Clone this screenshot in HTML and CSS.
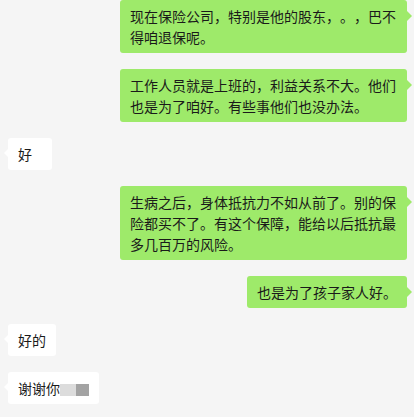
FILE: index.html
```html
<html>
<head>
  <link rel="stylesheet" href="styles.css">
</head>
<body>
  <div class="chat">
    <div class="row row-me"><div class="bubble bubble-me">现在保险公司，特别是他的股东，。，巴不得咱退保呢。</div></div>
    <div class="row row-me"><div class="bubble bubble-me">工作人员就是上班的，利益关系不大。他们也是为了咱好。有些事他们也没办法。</div></div>
    <div class="row row-other"><div class="bubble bubble-other short">好</div></div>
    <div class="row row-me"><div class="bubble bubble-me">生病之后，身体抵抗力不如从前了。别的保险都买不了。有这个保障，能给以后抵抗最多几百万的风险。</div></div>
    <div class="row row-me"><div class="bubble bubble-me">也是为了孩子家人好。</div></div>
    <div class="row row-other"><div class="bubble bubble-other">好的</div></div>
    <div class="row row-other"><div class="bubble bubble-other">谢谢你<span class="blur"><span class="blur-light"></span><span class="blur-dark"></span></span></div></div>
  </div>
</body>
</html>
```

FILE: styles.css
```css
body {
  margin: 0;
  background-color: #f5f5f5;
  font-family: "Noto Sans CJK SC", "Microsoft YaHei", sans-serif;
  font-size: 14px;
  color: #1a1a1a;
  text-spacing-trim: space-all;
}

.chat {
  display: flex;
  flex-direction: column;
  gap: 16px;
}

.row {
  display: flex;
}

.row-me {
  justify-content: flex-end;
  padding-right: 7px;
}

.row-other {
  justify-content: flex-start;
  padding-left: 8px;
}

.bubble {
  position: relative;
  line-height: 21px;
  padding: 6px 10px 5px 10px;
  border-radius: 3px;
  box-sizing: border-box;
}

.bubble-me {
  background-color: #9eea6a;
  max-width: 287px;
}

.bubble-me::after {
  content: "";
  position: absolute;
  right: -5px;
  top: 11px;
  border-top: 5px solid transparent;
  border-bottom: 5px solid transparent;
  border-left: 5px solid #9eea6a;
}

.bubble-other {
  background-color: #ffffff;
}

.bubble-other::after {
  content: "";
  position: absolute;
  left: -4px;
  top: 11px;
  border-top: 4px solid transparent;
  border-bottom: 4px solid transparent;
  border-right: 4px solid #ffffff;
}

.short {
  min-width: 44px;
}

.blur {
  display: inline-flex;
  vertical-align: middle;
  height: 12px;
}

.blur-light {
  width: 16px;
  background-color: #dcdcdc;
}

.blur-dark {
  width: 13px;
  background-color: #a3a3a3;
}
```
